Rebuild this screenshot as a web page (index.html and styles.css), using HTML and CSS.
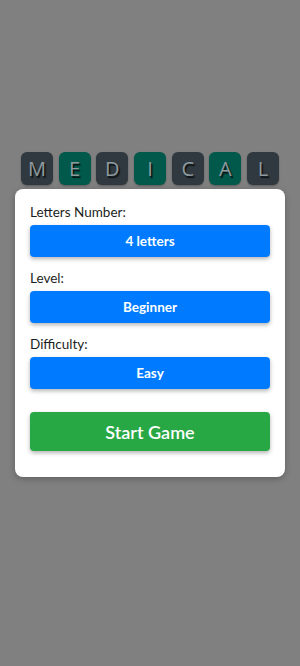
FILE: index.html
```html
<!DOCTYPE html>
<html lang="en">
<head>
    <meta charset="UTF-8">
    <meta name="viewport" content="width=device-width, initial-scale=1.0">
    <title>Medical Words</title>
    <link rel="stylesheet" href="styles.css">
</head>
<body>
    <div class="title">
        <span class="tile">M</span>
        <span class="tile alt">E</span>
        <span class="tile">D</span>
        <span class="tile alt">I</span>
        <span class="tile">C</span>
        <span class="tile alt">A</span>
        <span class="tile">L</span>
    </div>
    <div class="setup">
        <div class="label">Letters Number:</div>
        <button class="option">4 letters</button>
        <div class="label">Level:</div>
        <button class="option">Beginner</button>
        <div class="label">Difficulty:</div>
        <button class="option last">Easy</button>
        <button class="start">Start Game</button>
    </div>
</body>
</html>
```

FILE: styles.css
```css
body {
    margin: 0;
    padding-top: 152px;
    height: 666px;
    box-sizing: border-box;
    background-color: #808080;
    font-family: Lato, "Open Sans", sans-serif;
    display: flex;
    flex-direction: column;
    align-items: center;
}
.title {
    display: flex;
    gap: 5.7px;
}
.tile {
    width: 32px;
    height: 33px;
    border-radius: 6px;
    background: #2f393f;
    color: #8f9a9e;
    font-family: "Open Sans", sans-serif;
    font-size: 20px;
    display: flex;
    align-items: center;
    justify-content: center;
    text-shadow: 1.5px 1.5px 1px #0b0f11;
    box-shadow: 0 1px 2px rgba(0, 0, 0, 0.3);
}
.tile.alt {
    background: #00594b;
}
.setup {
    margin-top: 4px;
    width: 270px;
    box-sizing: border-box;
    padding: 15px 15px 26px;
    background: white;
    border-radius: 8px;
    box-shadow: 0 2px 6px rgba(0, 0, 0, 0.25);
    display: flex;
    flex-direction: column;
}
.label {
    font-size: 13.5px;
    line-height: 16px;
    color: #1b1e21;
    margin-bottom: 5px;
}
button {
    border: none;
    border-radius: 4px;
    color: white;
    font-family: inherit;
    cursor: pointer;
    box-shadow: 0 2px 4px rgba(0, 0, 0, 0.3);
}
.option {
    height: 32px;
    margin-bottom: 13px;
    background: #007bff;
    font-size: 13.5px;
    font-weight: 700;
}
.option.last {
    margin-bottom: 23px;
}
.start {
    height: 39px;
    background: #28a745;
    font-size: 18px;
    font-weight: 600;
}
```
